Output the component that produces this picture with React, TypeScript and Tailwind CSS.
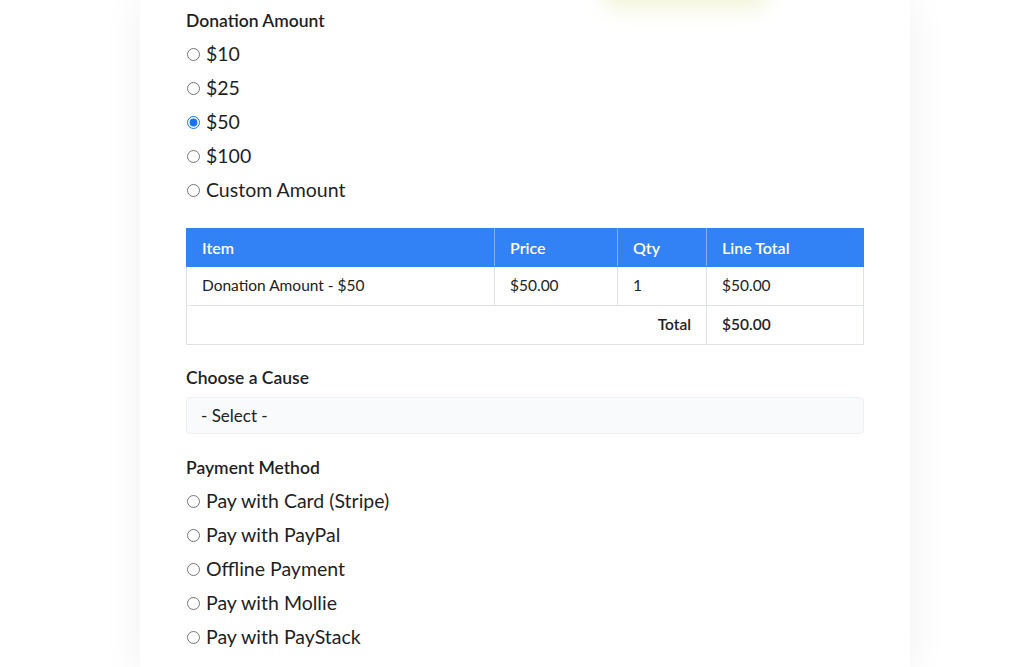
import React from "react";

const amounts = ["$10", "$25", "$50", "$100", "Custom Amount"];
const methods = [
  "Pay with Card (Stripe)",
  "Pay with PayPal",
  "Offline Payment",
  "Pay with Mollie",
  "Pay with PayStack",
];

function Radio({ label, checked }: { label: string; checked?: boolean }) {
  return (
    <label className="flex h-[34px] items-center gap-[6px] text-[19.5px] text-[#1f1f1f]">
      <input
        type="radio"
        defaultChecked={checked}
        className="ml-[1px] h-[13px] w-[13px] accent-[#1a73e8]"
      />
      <span>{label}</span>
    </label>
  );
}

export default function App() {
  return (
    <div
      className="relative min-h-[667px] overflow-hidden bg-white"
      style={{ fontFamily: "Lato, 'Noto Sans', sans-serif" }}
    >
      <div className="absolute left-[600px] top-[-30px] h-[40px] w-[170px] rounded-full bg-[#f3f5dc] blur-[10px]" />
      <div className="ml-[140px] w-[770px] bg-white px-[46px] pt-[10px] pb-[20px] shadow-[0_0_40px_rgba(0,0,0,0.06)]">
        <div className="text-[17.5px] font-semibold leading-[22px] text-[#1f1f1f]">
          Donation Amount
        </div>
        <div className="mt-[5px] flex flex-col">
          {amounts.map((a) => (
            <Radio key={a} label={a} checked={a === "$50"} />
          ))}
        </div>

        <table className="mt-[21px] w-[678px] border-collapse text-[15.5px] text-[#222]">
          <thead>
            <tr className="h-[38px] bg-[#3282f6] text-left text-[16px] text-white">
              <th className="w-[308px] border border-[#3282f6] border-r-[#7fb0f8] px-[15px] font-semibold">Item</th>
              <th className="w-[123px] border border-[#3282f6] border-r-[#7fb0f8] px-[15px] font-semibold">Price</th>
              <th className="w-[89px] border border-[#3282f6] border-r-[#7fb0f8] px-[15px] font-semibold">Qty</th>
              <th className="border border-[#3282f6] px-[15px] font-semibold">Line Total</th>
            </tr>
          </thead>
          <tbody>
            <tr className="h-[39px]">
              <td className="border border-[#dee2e6] px-[15px]">Donation Amount - $50</td>
              <td className="border border-[#dee2e6] px-[15px]">$50.00</td>
              <td className="border border-[#dee2e6] px-[15px]">1</td>
              <td className="border border-[#dee2e6] px-[15px]">$50.00</td>
            </tr>
            <tr className="h-[39px]">
              <td colSpan={3} className="border border-[#dee2e6] px-[15px] text-right font-semibold">
                Total
              </td>
              <td className="border border-[#dee2e6] px-[15px] font-semibold">$50.00</td>
            </tr>
          </tbody>
        </table>

        <div className="mt-[22px] text-[17.5px] font-semibold leading-[22px] text-[#1f1f1f]">
          Choose a Cause
        </div>
        <div className="mt-[8px] flex h-[37px] w-[678px] items-center rounded-[4px] border border-[#eef1f4] bg-[#f8fafc] px-[14px] text-[17px] text-[#222]">
          - Select -
        </div>

        <div className="mt-[23px] text-[17.5px] font-semibold leading-[22px] text-[#1f1f1f]">
          Payment Method
        </div>
        <div className="mt-[5px] flex flex-col">
          {methods.map((m) => (
            <Radio key={m} label={m} />
          ))}
        </div>
      </div>
    </div>
  );
}
